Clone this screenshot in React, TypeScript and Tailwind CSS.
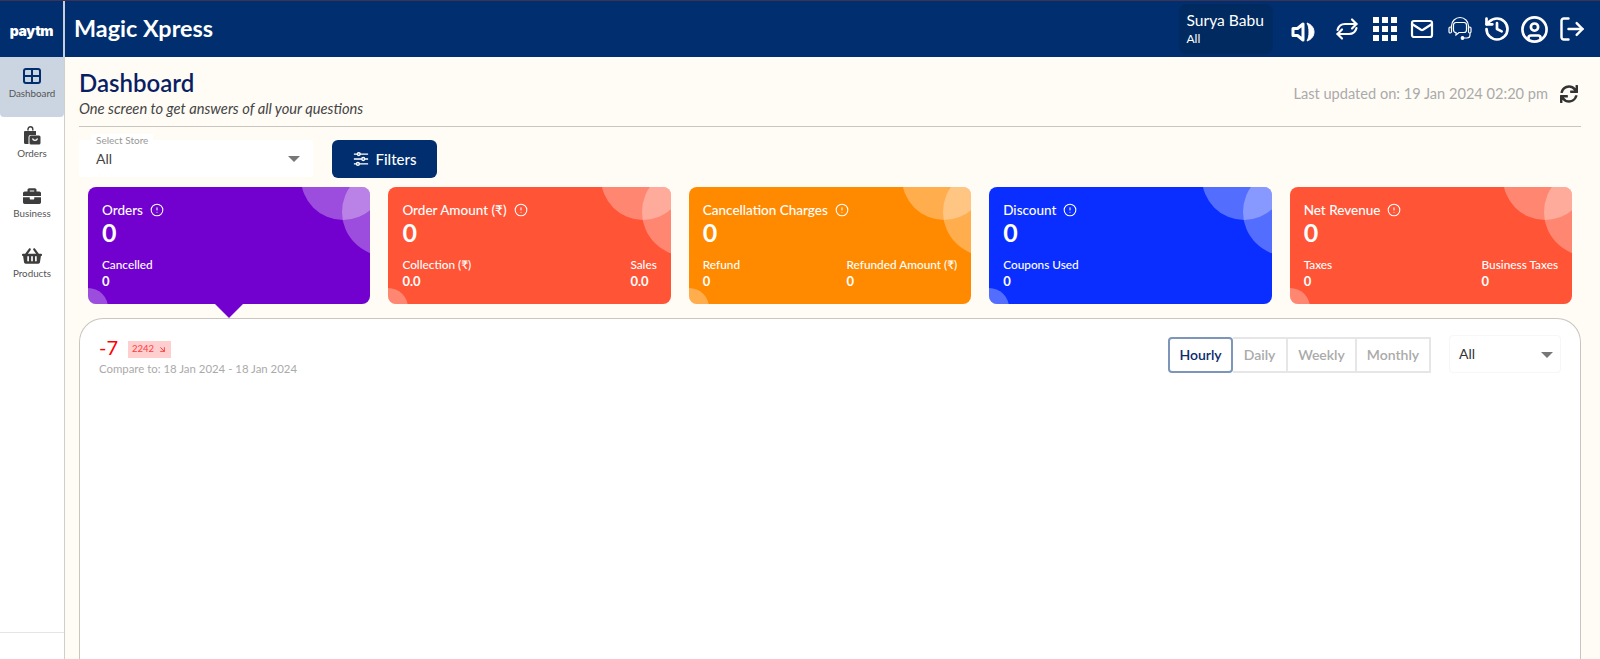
import { ArrowDownRight, CircleAlert, CircleUser, History, LogOut, Mail } from 'lucide-react'
import { FaBriefcase, FaShoppingBasket, FaSync } from 'react-icons/fa'
import type { ReactNode } from 'react'

const cards = [
  { title: 'Orders', bg: 'bg-[#7200cf]', left: ['Cancelled', '0'], right: null },
  { title: 'Order Amount (₹)', bg: 'bg-[#ff5436]', left: ['Collection (₹)', '0.0'], right: ['Sales', '0.0'] },
  { title: 'Cancellation Charges', bg: 'bg-[#ff8a00]', left: ['Refund', '0'], right: ['Refunded Amount (₹)', '0'] },
  { title: 'Discount', bg: 'bg-[#0a2eff]', left: ['Coupons Used', '0'], right: null },
  { title: 'Net Revenue', bg: 'bg-[#ff5436]', left: ['Taxes', '0'], right: ['Business Taxes', '0'] },
]

function DashboardIcon() {
  return (
    <svg width="18" height="16" viewBox="0 0 18 16" fill="none" stroke="#002e6e" strokeWidth="2">
      <rect x="1" y="1" width="16" height="14" rx="2" />
      <path d="M9 1v14M1 8h16" />
    </svg>
  )
}

function OrdersIcon() {
  return (
    <svg width="20" height="20" viewBox="0 0 20 20" fill="#3d3d3d">
      <path d="M6 4.500V3.200a2.400 2.400 0 0 1 4.800 0v1.300" fill="none" stroke="#3d3d3d" strokeWidth="1.400" />
      <path d="M2.500 5h11.500v4H8.500a2 2 0 0 0-2 2v7H3.500a1.500 1.500 0 0 1-1.500-1.500V6z" />
      <rect x="7.500" y="9.500" width="11" height="9" rx="1.500" />
      <path d="M10.500 12.500a2.600 2.600 0 0 0 5 0" fill="none" stroke="#fff" strokeWidth="1.200" />
    </svg>
  )
}

function SoundIcon() {
  return (
    <svg width="25" height="26" viewBox="0 0 25 26" fill="none" stroke="#fff" strokeWidth="3" strokeLinejoin="round">
      <path d="M2 9.500h4.500L12 5v16l-5.500-4.500H2z" />
      <path d="M16 4c4.500 1.500 7 5 7 9s-2.500 7.500-7 9c1.500-2.500 2-5.500 2-9s-.5-6.500-2-9z" fill="#fff" strokeWidth="1" />
    </svg>
  )
}

function SwapIcon() {
  return (
    <svg width="24" height="24" viewBox="0 0 24 24" fill="none" stroke="#fff" strokeWidth="2.200" strokeLinecap="round" strokeLinejoin="round">
      <path d="M2.500 13C3.500 9 6 7 10 7h11.500" />
      <path d="M17 2.500 21.500 7 17 11.500" />
      <path d="M21.500 11c-1 4-3.500 6-7.500 6H2.500" />
      <path d="M7 12.500 2.500 17 7 21.500" />
    </svg>
  )
}

function HeadsetIcon() {
  return (
    <svg width="24" height="26" viewBox="0 0 24 26" fill="none" stroke="#fff" strokeWidth="1.200">
      <path d="M3.500 13V10a8.500 8.500 0 0 1 17 0v3" />
      <rect x="1" y="11" width="2.500" height="6" rx="1.200" />
      <rect x="20.500" y="11" width="2.500" height="6" rx="1.200" />
      <path d="M8 6.500h8a2.500 2.500 0 0 1 2.500 2.500v5a2.500 2.500 0 0 1-2.500 2.500h-5l-3 2.500v-2.500a2.500 2.500 0 0 1-2.500-2.500V9A2.500 2.500 0 0 1 8 6.500z" />
      <path d="M8.500 11.500h.01M12 11.500h.01M15.500 11.500h.01" strokeWidth="2" />
      <path d="M22 17v2a3 3 0 0 1-3 3h-3" />
      <circle cx="14.500" cy="22" r="1.300" fill="#fff" />
    </svg>
  )
}

function FilterIcon() {
  return (
    <svg width="16" height="16" viewBox="0 0 18 18" fill="none" stroke="#fff" strokeWidth="1.600">
      <path d="M1 3.500h4M8 3.500h9M1 9h9M13 9h4M1 14.500h3M7 14.500h10" />
      <circle cx="6.500" cy="3.500" r="1.600" />
      <circle cx="11.500" cy="9" r="1.600" />
      <circle cx="5.500" cy="14.500" r="1.600" />
    </svg>
  )
}

function GridIcon() {
  return (
    <div className="grid h-[24px] w-[24px] grid-cols-3 gap-[3px]">
      {Array.from({ length: 9 }).map((_, i) => (
        <span key={i} className="bg-white" />
      ))}
    </div>
  )
}

function TopIcon({ children, className = '' }: { children: ReactNode; className?: string }) {
  return <div className={`flex h-[30px] w-[37.500px] items-center justify-center ${className}`}>{children}</div>
}

function SideItem({ icon, label, active }: { icon: ReactNode; label: string; active?: boolean }) {
  return (
    <div className={`flex h-[60px] flex-col items-center rounded-b-sm pt-[9px] ${active ? 'bg-[#cbd5e1]' : ''}`}>
      <div className="flex h-[20px] items-center justify-center">{icon}</div>
      <span className="text-[9.800px] leading-[14px] text-[#555]">{label}</span>
    </div>
  )
}

function Card({ title, bg, left, right }: (typeof cards)[number]) {
  return (
    <div className={`relative h-[117px] flex-1 overflow-hidden rounded-lg pl-[14px] pr-[14px] pt-[15px] text-white ${bg}`}>
      <div className="absolute left-[213px] top-[-51px] h-[84px] w-[84px] rounded-full bg-white/30" />
      <div className="absolute left-[254px] top-[-19px] h-[88px] w-[88px] rounded-full bg-white/30" />
      <div className="absolute left-[-20px] top-[101px] h-[40px] w-[40px] rounded-full bg-white/30" />
      <div className="flex h-[16px] items-center gap-[7px] text-[13.500px] leading-[16px] font-medium">
        {title}
        <CircleAlert size={14} strokeWidth={1.800} />
      </div>
      <div className="mt-[-1px] text-[25px] leading-[30px] font-bold">0</div>
      <div className="relative mt-[10px] flex justify-between">
        <div>
          <div className="text-[11.800px] leading-[16px] font-medium">{left[0]}</div>
          <div className="text-[13px] leading-[16px] font-bold">{left[1]}</div>
        </div>
        {right && (
          <div>
            <div className="text-[11.800px] leading-[16px] font-medium">{right[0]}</div>
            <div className="text-[13px] leading-[16px] font-bold">{right[1]}</div>
          </div>
        )}
      </div>
    </div>
  )
}

export default function App() {
  return (
    <div className="flex h-[659px] w-[1600px] flex-col overflow-hidden bg-[#fffcf6] font-['Lato','Noto_Sans',sans-serif]">
      <header className="flex h-[57px] shrink-0 items-center border-t border-[#3d3350] bg-[#002e6e] text-white">
        <div className="flex h-full w-[65px] items-center justify-center border-r-2 border-[#c5cfdc] pt-[2px] font-['Inter',sans-serif] text-[14px] font-black tracking-tight">
          paytm
        </div>
        <div className="ml-[9px] text-[23.400px] font-bold">Magic Xpress</div>
        <div className="ml-auto mr-[9px] flex items-center">
          <div className="mr-[12px] flex h-[50px] w-[94px] flex-col justify-center rounded-lg bg-[#002a60] pl-[8px]">
            <span className="text-[15.600px] leading-[20px]">Surya Babu</span>
            <span className="text-[12px] leading-[18px]">All</span>
          </div>
          <div className="flex items-center">
            <TopIcon className="mr-[6.500px] mt-[5px]"><SoundIcon /></TopIcon>
            <TopIcon><SwapIcon /></TopIcon>
            <TopIcon><GridIcon /></TopIcon>
            <TopIcon><Mail size={24} strokeWidth={2.200} /></TopIcon>
            <TopIcon><HeadsetIcon /></TopIcon>
            <TopIcon><History size={28} strokeWidth={2.300} /></TopIcon>
            <TopIcon><CircleUser size={29} strokeWidth={2.200} /></TopIcon>
            <TopIcon><LogOut size={28} strokeWidth={2.100} /></TopIcon>
          </div>
        </div>
      </header>

      <div className="flex min-h-0 flex-1">
        <aside className="relative w-[65px] shrink-0 border-r border-[#cfcfcb] bg-white">
          <SideItem active icon={<DashboardIcon />} label="Dashboard" />
          <SideItem icon={<OrdersIcon />} label="Orders" />
          <SideItem icon={<FaBriefcase size={18} color="#3d3d3d" />} label="Business" />
          <SideItem icon={<FaShoppingBasket size={20} color="#3d3d3d" />} label="Products" />
          <div className="absolute inset-x-0 top-[575px] h-[1px] bg-[#e5e5e5]" />
        </aside>

        <main className="flex min-w-0 flex-1 flex-col pl-[14px] pr-[19px]">
          <div className="flex h-[70px] shrink-0 items-start justify-between border-b border-[#c9c6c0] pt-[10px]">
            <div>
              <h1 className="text-[24px] leading-[32px] font-semibold text-[#0a1f63]">Dashboard</h1>
              <p className="text-[14.700px] leading-[19px] italic text-[#444]">One screen to get answers of all your questions</p>
            </div>
            <div className="mt-[18px] flex items-center gap-[12px] pr-[3px]">
              <span className="text-[14.600px] leading-[18px] text-[#aaa]">Last updated on: 19 Jan 2024 02:20 pm</span>
              <FaSync size={18} color="#333" />
            </div>
          </div>

          <div className="mt-[13px] flex shrink-0 items-start gap-[19px]">
            <div className="relative flex h-[37px] w-[234px] items-center justify-between rounded-sm bg-white pl-[17px] pr-[13px]">
              <span className="absolute left-[12px] top-[-6px] bg-white px-[5px] text-[10px] leading-[13px] text-[#999]">Select Store</span>
              <span className="text-[14px] text-[#444]">All</span>
              <span className="h-0 w-0 border-x-[6px] border-t-[6px] border-x-transparent border-t-[#777]" />
            </div>
            <button className="flex h-[38px] w-[105px] items-center justify-center gap-[7px] rounded-md bg-[#002e6e] text-[15px] font-medium text-white">
              <FilterIcon />
              Filters
            </button>
          </div>

          <div className="mt-[9px] flex shrink-0 gap-[18px] pl-[9px] pr-[9px]">
            {cards.map((c) => (
              <Card key={c.title} {...c} />
            ))}
          </div>

          <div className="ml-[136px] h-0 w-0 shrink-0 border-x-[14px] border-t-[14px] border-x-transparent border-t-[#7200cf]" />

          <section className="flex min-h-0 flex-1 justify-between rounded-t-[24px] border-x border-t border-[#c9c6c0] bg-white pl-[19px] pr-[19px] pt-[16px]">
            <div>
              <div className="flex items-center gap-[10px]">
                <span className="text-[20px] leading-[24px] text-[#ff0000]">-7</span>
                <span className="mt-[5px] flex h-[17px] w-[43px] items-center justify-center gap-[4px] bg-[#ffcfcf] text-[9.500px] text-[#ff3b3b]">
                  2242
                  <ArrowDownRight size={9} strokeWidth={2.500} />
                </span>
              </div>
              <p className="mt-[2px] text-[11.400px] leading-[16px] text-[#aaa]">Compare to: 18 Jan 2024 - 18 Jan 2024</p>
            </div>
            <div className="flex items-start gap-[18px]">
              <div className="mt-[2px] flex h-[36px] text-[14px] leading-[30px] font-semibold text-[#aaa]">
                <div className="flex w-[65px] items-center justify-center rounded-sm border-2 border-[#7d95b9] text-[#0a2c6b]">Hourly</div>
                <div className="flex w-[55px] items-center justify-center border-y-2 border-r-2 border-[#e6e6e8]">Daily</div>
                <div className="flex w-[69px] items-center justify-center border-y-2 border-r-2 border-[#e6e6e8]">Weekly</div>
                <div className="flex w-[74px] items-center justify-center border-y-2 border-r-2 border-[#e6e6e8]">Monthly</div>
              </div>
              <div className="flex h-[38px] w-[112px] items-center justify-between rounded-sm border border-[#f6f6fb] pb-[2px] pl-[9px] pr-[7px]">
                <span className="text-[14px] text-[#333]">All</span>
                <span className="mt-[4px] h-0 w-0 border-x-[6px] border-t-[6px] border-x-transparent border-t-[#777]" />
              </div>
            </div>
          </section>
        </main>
      </div>
    </div>
  )
}
